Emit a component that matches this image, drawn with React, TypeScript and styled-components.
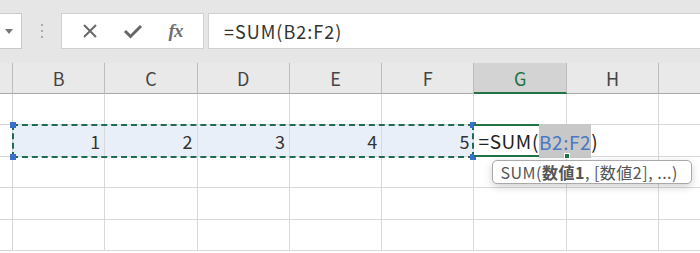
import * as React from 'react'
import styled, { createGlobalStyle, css } from 'styled-components'

const GlobalStyle = createGlobalStyle`
  html, body {
    margin: 0;
    padding: 0;
    background: #fff;
  }
  body {
    font-family: "Noto Sans CJK JP", "Noto Sans", sans-serif;
  }
  * {
    box-sizing: border-box;
  }
`

const GREEN = '#217346'
const COLS = ['B', 'C', 'D', 'E', 'F', 'G', 'H', '']
const ACTIVE_COL = 'G'
const VALUES = [1, 2, 3, 4, 5]

const Page = styled.div`
  width: 700px;
  height: 253px;
  overflow: hidden;
  background: #fff;
`

const FormulaRow = styled.div`
  display: flex;
  align-items: stretch;
  height: 63px;
  padding: 13px 0 14px;
  background: #e6e6e6;
`

const NameBox = styled.div`
  width: 22px;
  display: flex;
  align-items: center;
  justify-content: center;
  background: #fff;
  border: 1px solid #c9c9c9;
  border-left: none;
  padding-right: 3px;
`

const Grip = styled.div`
  width: 39px;
  display: flex;
  align-items: center;
  justify-content: center;
`

const ButtonGroup = styled.div`
  width: 143px;
  display: flex;
  align-items: center;
  justify-content: space-around;
  padding: 0 6px;
  background: #fff;
  border: 1px solid #d0d0d0;
`

const IconButton = styled.span`
  width: 30px;
  display: flex;
  align-items: center;
  justify-content: center;
  color: #676767;
`

const Fx = styled.span`
  font-family: "Liberation Serif", "DejaVu Serif", serif;
  font-style: italic;
  font-weight: bold;
  font-size: 19px;
  color: #707070;
  letter-spacing: -1px;
`

const FormulaInput = styled.div`
  flex: 1;
  margin-left: 4px;
  display: flex;
  align-items: center;
  padding-left: 15px;
  background: #fff;
  border: 1px solid #d0d0d0;
  border-right: none;
  font-size: 18px;
  letter-spacing: 1px;
  color: #333;
`

const Sheet = styled.div`
  display: grid;
  grid-template-columns: 13px repeat(8, 92.3px);
  grid-template-rows: 31px repeat(5, 31.4px);
`

type GridPos = { $row: number; $col: number }

const placed = css<GridPos>`
  grid-row: ${({ $row }) => $row};
  grid-column: ${({ $col }) => $col};
`

const Corner = styled.div<GridPos>`
  ${placed};
  background: #e9e9e9;
  border-right: 1px solid #bdbdbd;
  border-bottom: 1px solid #a8a8a8;
`

const ColHeader = styled.div<GridPos & { $active?: boolean }>`
  ${placed};
  display: flex;
  align-items: center;
  justify-content: center;
  font-size: 18px;
  color: ${({ $active }) => ($active ? GREEN : '#444')};
  background: ${({ $active }) => ($active ? '#d3d3d3' : '#e9e9e9')};
  border-right: 1px solid #bdbdbd;
  border-bottom: ${({ $active }) => ($active ? `2px solid ${GREEN}` : '1px solid #a8a8a8')};
  padding-top: ${({ $active }) => ($active ? '1px' : '0')};
`

const RowHeader = styled.div<GridPos>`
  ${placed};
  background: #fff;
  border-right: 1px solid #d4d4d4;
  border-bottom: 1px solid #d4d4d4;
`

const Cell = styled.div<GridPos & { $selected?: boolean }>`
  ${placed};
  display: flex;
  align-items: center;
  justify-content: flex-end;
  padding-right: 4px;
  font-size: 18px;
  color: #333;
  background: ${({ $selected }) => ($selected ? '#e9eff9' : '#fff')};
  border-right: 1px solid #d9d9d9;
  border-bottom: 1px solid #d9d9d9;
`

const ActiveCell = styled.div<GridPos>`
  ${placed};
  position: relative;
  z-index: 3;
  display: flex;
  align-items: center;
  padding-left: 4px;
  white-space: nowrap;
  font-size: 19px;
  letter-spacing: 0.6px;
  color: #222;
  background: #fff;
  border-top: 2px solid ${GREEN};
  border-bottom: 2px solid ${GREEN};
  margin-top: -1px;
`

const RangeRef = styled.span`
  color: #4a78c4;
  background: #c8c8c8;
  padding: 4px 0 3px;
`

const FillHandle = styled.span`
  position: absolute;
  right: -3px;
  bottom: -4px;
  width: 6px;
  height: 6px;
  background: ${GREEN};
  border: 1px solid #fff;
`

const Tooltip = styled.div`
  position: absolute;
  left: 18px;
  top: 34px;
  width: 200px;
  height: 24px;
  display: flex;
  align-items: center;
  padding-left: 7px;
  font-size: 16px;
  letter-spacing: 0.5px;
  color: #555;
  background: #fff;
  border: 1px solid #a9a9a9;
  border-radius: 5px;
  box-shadow: 0 3px 8px rgba(0, 0, 0, 0.18);
  z-index: 5;
  b {
    font-weight: bold;
    color: #555;
  }
`

const Selection = styled.div`
  grid-column: 2 / 7;
  grid-row: 3;
  position: relative;
  z-index: 2;
  margin: -1px 0 -1px -1px;
  border: 2px dashed #1f6b57;
  pointer-events: none;
`

const Handle = styled.span<{ $top?: boolean; $left?: boolean }>`
  position: absolute;
  width: 6px;
  height: 6px;
  background: #3a6fd0;
  ${({ $top }) => ($top ? 'top: -4px;' : 'bottom: -4px;')}
  ${({ $left }) => ($left ? 'left: -4px;' : 'right: -4px;')}
`

const Cross = () => (
  <svg width="16" height="16" viewBox="0 0 16 16">
    <path d="M2 2 L14 14 M14 2 L2 14" stroke="currentColor" strokeWidth="2" fill="none" />
  </svg>
)

const Check = () => (
  <svg width="20" height="16" viewBox="0 0 20 16">
    <path d="M2 8 L7.5 13.5 L18 3" stroke="currentColor" strokeWidth="3" fill="none" strokeLinejoin="miter" />
  </svg>
)

const Caret = () => (
  <svg width="8" height="5" viewBox="0 0 8 5">
    <path d="M0 0 L8 0 L4 5 Z" fill="#777" />
  </svg>
)

const Dots = () => (
  <svg width="4" height="14" viewBox="0 0 4 14">
    <rect x="1" y="0" width="2" height="2" fill="#aaa" />
    <rect x="1" y="6" width="2" height="2" fill="#aaa" />
    <rect x="1" y="12" width="2" height="2" fill="#aaa" />
  </svg>
)

export default function App() {
  const rows = [1, 2, 3, 4, 5]
  return (
    <Page>
      <GlobalStyle />
      <FormulaRow>
        <NameBox>
          <Caret />
        </NameBox>
        <Grip>
          <Dots />
        </Grip>
        <ButtonGroup>
          <IconButton>
            <Cross />
          </IconButton>
          <IconButton>
            <Check />
          </IconButton>
          <IconButton>
            <Fx>fx</Fx>
          </IconButton>
        </ButtonGroup>
        <FormulaInput>=SUM(B2:F2)</FormulaInput>
      </FormulaRow>

      <Sheet>
        <Corner $row={1} $col={1} />
        {COLS.map((c, i) => (
          <ColHeader key={i} $row={1} $col={i + 2} $active={c === ACTIVE_COL}>
            {c}
          </ColHeader>
        ))}

        {rows.map(r => (
          <React.Fragment key={r}>
            <RowHeader $row={r + 1} $col={1} />
            {COLS.map((c, i) => {
              const pos = { $row: r + 1, $col: i + 2 }
              if (r === 2 && i < VALUES.length) {
                return (
                  <Cell key={i} {...pos} $selected>
                    {VALUES[i]}
                  </Cell>
                )
              }
              if (r === 2 && c === ACTIVE_COL) {
                return (
                  <ActiveCell key={i} {...pos}>
                    =SUM(<RangeRef>B2:F2</RangeRef>)
                    <FillHandle />
                    <Tooltip>
                      SUM(<b>数値1</b>, [数値2], ...)
                    </Tooltip>
                  </ActiveCell>
                )
              }
              return <Cell key={i} {...pos} />
            })}
          </React.Fragment>
        ))}

        <Selection>
          <Handle $top $left />
          <Handle $top />
          <Handle $left />
          <Handle />
        </Selection>
      </Sheet>
    </Page>
  )
}
